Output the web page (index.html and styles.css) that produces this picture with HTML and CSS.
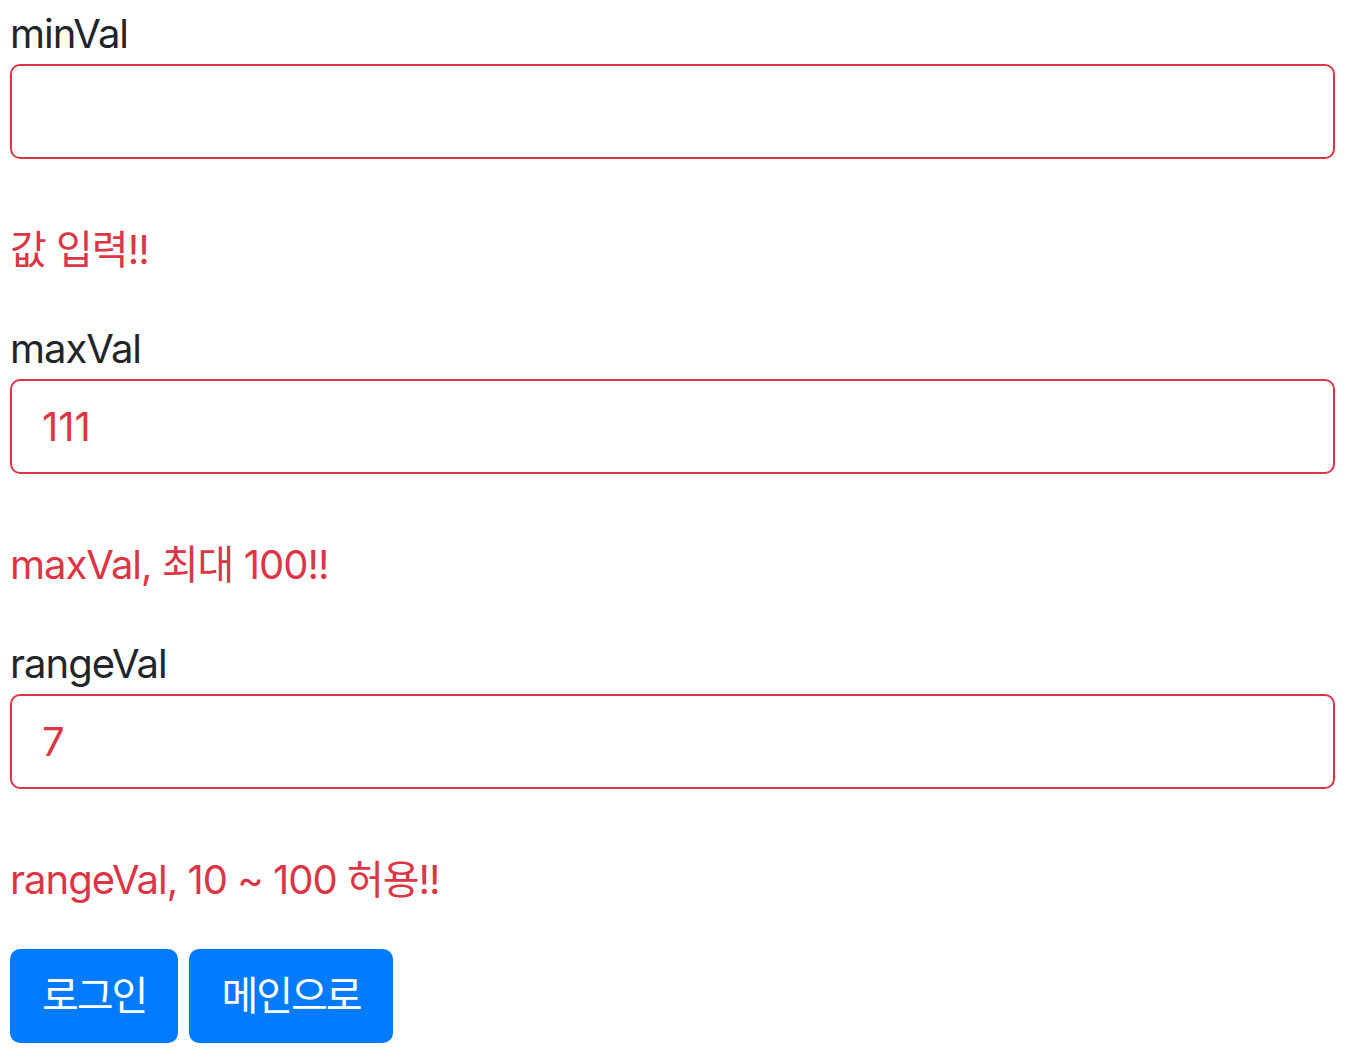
FILE: index.html
```html
<!DOCTYPE html>
<html>
  <head>
    <meta charset="utf-8">
    <title>validation</title>
    <link rel="stylesheet" href="styles.css">
  </head>
  <body>
    <form class="container">
      <div class="field">
        <label for="minVal">minVal</label>
        <input type="text" id="minVal" class="form-control field-error" value="">
      </div>
      <div class="field-error">값 입력!!</div>

      <div class="field">
        <label for="maxVal">maxVal</label>
        <input type="text" id="maxVal" class="form-control field-error" value="111">
      </div>
      <div class="field-error">maxVal, 최대 100!!</div>

      <div class="field">
        <label for="rangeVal">rangeVal</label>
        <input type="text" id="rangeVal" class="form-control field-error" value="7">
      </div>
      <div class="field-error">rangeVal, 10 ~ 100 허용!!</div>

      <div class="buttons">
        <button type="submit" class="btn">로그인</button>
        <button type="button" class="btn">메인으로</button>
      </div>
    </form>
  </body>
</html>
```

FILE: styles.css
```css
html {
  background-color: #fff;
}

body {
  margin: 0;
  padding: 4px 15px 0 10px;
  font-family: Inter, "Noto Sans CJK KR", sans-serif;
  font-size: 40px;
  line-height: 1.5;
  letter-spacing: -1px;
  color: #212529;
}

.field label {
  display: inline-block;
}

.form-control {
  display: block;
  box-sizing: border-box;
  width: 100%;
  height: 95px;
  margin: 0;
  padding: 15px 30px;
  font-family: inherit;
  font-size: 40px;
  line-height: 1.5;
  letter-spacing: 0;
  color: #212529;
  background-color: #fff;
  border: 2px solid #ced4da;
  border-radius: 10px;
  outline: none;
}

.form-control.field-error {
  border-color: #dc3545;
  color: #dc3545;
}

div.field-error {
  margin: 61px 0 39px 0;
  font-size: 40px;
  color: #dc3545;
}

.buttons {
  display: flex;
  gap: 11px;
}

.btn {
  display: inline-block;
  box-sizing: border-box;
  height: 94px;
  padding: 15px 30px;
  font-family: inherit;
  font-size: 40px;
  line-height: 1.5;
  letter-spacing: -2px;
  color: #fff;
  background-color: #007bff;
  border: 2px solid #007bff;
  border-radius: 10px;
}
```
